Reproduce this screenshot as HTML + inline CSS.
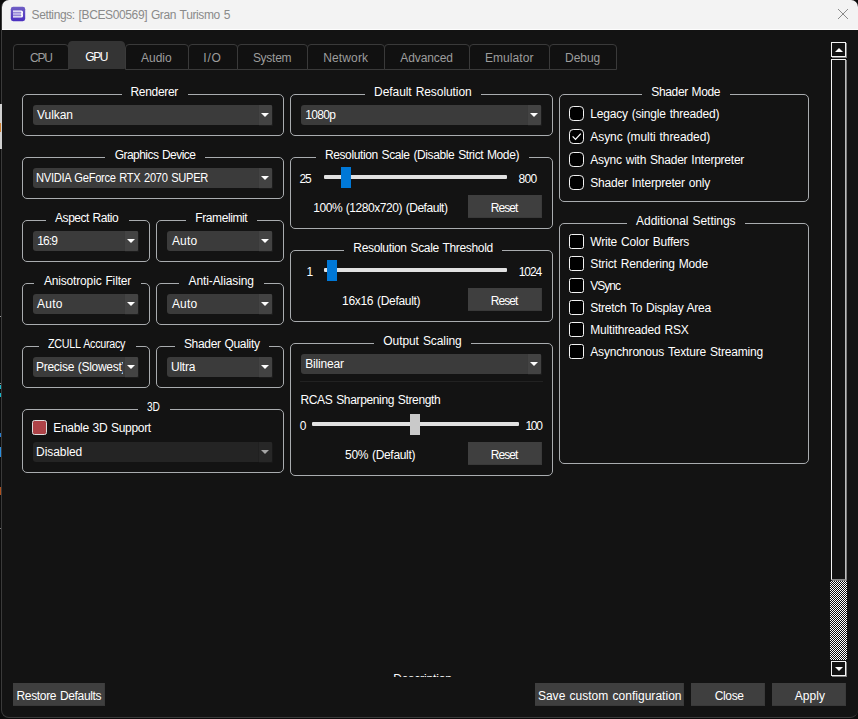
<!DOCTYPE html>
<html><head><meta charset="utf-8"><title>Settings: [BCES00569] Gran Turismo 5</title>
<style>
html,body{margin:0;padding:0;}
body{width:858px;height:719px;overflow:hidden;background:#0c0c0c;position:relative;font-family:"Liberation Sans",sans-serif;font-size:12px;}
div,span{position:absolute;box-sizing:border-box;}
.t{white-space:nowrap;line-height:14px;font-size:12px;word-spacing:0.8px;}
#win{left:1px;top:0;width:857px;height:718px;background:#131313;border-radius:8px 8px 8px 8px;border:1px solid #3a3a3a;border-top:none;border-right:none;overflow:hidden;}
#tb{left:0;top:0;width:858px;height:30px;background:#f3f3f3;border-bottom:1px solid #fdfdfd;}
.tab{border:1px solid #3a3a3a;border-radius:4px 4px 0 0;background:#111;}
.tab.sel{background:#343434;border-color:#343434;}
.g{border:1px solid #a9acaf;border-radius:5px;}
.gap{background:#131313;height:3px;}
.cb{background:#3b3b3b;border-radius:3px;}
.cbb{background:#434343;border-left:1px solid #3a3a3a;box-shadow:1px 1px 0 #1c1c1c;}
.cb.dis{background:#242424;}
.cb.dis .cbb{background:#272727;border-left-color:#202020;box-shadow:1px 1px 0 #181818;}
.arr{width:0;height:0;border-left:4px solid transparent;border-right:4px solid transparent;border-top:4.5px solid #fff;}
.dis .arr{border-top-color:#a5a5a5;}
.btn{background:#3f3f3f;border-right:1px solid #3a3a3a;border-bottom:1px solid #393939;}
.trk{background:#e1e1e1;height:4px;border-radius:1px;}
.hnd{width:10px;height:21px;background:#0078d7;}
.rb{width:15px;height:15px;border:1.3px solid #f4f4f4;border-radius:4.2px;background:#000;}
.ck{width:15px;height:15px;border:1.3px solid #f4f4f4;border-radius:2.5px;background:#000;}
</style></head><body>

<div id="win">
</div>
<div style="left:0;top:104px;width:2px;height:45px;background:#d0d0d0"></div>
<div style="left:0;top:123px;width:1px;height:9px;background:#d08030"></div>
<div style="left:0;top:316px;width:1px;height:1px;background:#9a9a9a"></div>
<div style="left:0;top:383px;width:1px;height:1px;background:#9a9a9a"></div>
<div style="left:0;top:385px;width:1px;height:4px;background:#19b5c8"></div>
<div style="left:0;top:393px;width:1px;height:4px;background:#19b5c8"></div>
<div style="left:0;top:433px;width:1px;height:4px;background:#2a7fd0"></div>
<div style="left:0;top:447px;width:1px;height:10px;background:#2a8fe0"></div>
<div style="left:0;top:487px;width:1px;height:8px;background:#b0501c"></div>
<div style="left:0;top:528px;width:1px;height:1px;background:#777"></div>
<div id="tb" style="left:2px;width:856px;border-radius:7px 7px 0 0;"></div>
<svg style="position:absolute;left:10px;top:6px" width="16" height="16" viewBox="0 0 16 16">
<defs><linearGradient id="ig" x1="0" y1="0" x2="0" y2="1"><stop offset="0" stop-color="#6f5ec4"/><stop offset="1" stop-color="#4a2fc0"/></linearGradient></defs>
<rect x="0.8" y="0.8" width="14.4" height="14.4" rx="2.4" fill="url(#ig)"/>
<path d="M3 4.5H11.3Q13 4.5 13 6.1V7.2Q13 7.8 12.4 8Q13 8.2 13 8.8V9.9Q13 11.5 11.3 11.5H3V10.3H10.6Q11.2 10.3 11.2 9.8V9.1Q11.2 8.6 10.6 8.6H3V7.4H10.6Q11.2 7.4 11.2 6.9V6.2Q11.2 5.7 10.6 5.7H3Z" fill="#fff"/>
<rect x="3" y="5.7" width="8.2" height="1.7" fill="#fff" opacity="0.35"/><rect x="3" y="8.6" width="8.2" height="1.7" fill="#fff" opacity="0.35"/>
</svg>
<svg style="position:absolute;left:837px;top:8px" width="12" height="12" viewBox="0 0 12 12"><path d="M1 1L11 11M11 1L1 11" stroke="#8a8a8a" stroke-width="1" fill="none"/></svg>
<div class="tab" style="left:13px;top:44px;width:56px;height:26px"></div>
<div class="tab sel" style="left:68px;top:41px;width:57px;height:28px"></div>
<div class="tab" style="left:125px;top:44px;width:64px;height:26px"></div>
<div class="tab" style="left:188px;top:44px;width:50px;height:26px"></div>
<div class="tab" style="left:237px;top:44px;width:71px;height:26px"></div>
<div class="tab" style="left:307px;top:44px;width:78px;height:26px"></div>
<div class="tab" style="left:384px;top:44px;width:86px;height:26px"></div>
<div class="tab" style="left:469px;top:44px;width:81px;height:26px"></div>
<div class="tab" style="left:549px;top:44px;width:68px;height:26px"></div>
<div class="g" style="left:22px;top:94px;width:262px;height:42px"></div>
<div class="gap" style="left:122.0px;top:93px;width:66.0px"></div>
<div class="g" style="left:22px;top:157px;width:262px;height:42px"></div>
<div class="gap" style="left:104.8px;top:156px;width:99.8px"></div>
<div class="g" style="left:22px;top:220px;width:128px;height:42px"></div>
<div class="gap" style="left:46.0px;top:219px;width:82.6px"></div>
<div class="g" style="left:156px;top:220px;width:128px;height:42px"></div>
<div class="gap" style="left:186.4px;top:219px;width:71.1px"></div>
<div class="g" style="left:22px;top:283px;width:128px;height:42px"></div>
<div class="gap" style="left:34.0px;top:282px;width:106.7px"></div>
<div class="g" style="left:156px;top:283px;width:128px;height:42px"></div>
<div class="gap" style="left:179.2px;top:282px;width:84.8px"></div>
<div class="g" style="left:22px;top:346px;width:128px;height:42px"></div>
<div class="gap" style="left:38.8px;top:345px;width:97.0px"></div>
<div class="g" style="left:156px;top:346px;width:128px;height:42px"></div>
<div class="gap" style="left:175.0px;top:345px;width:94.0px"></div>
<div class="g" style="left:22px;top:409px;width:262px;height:64px"></div>
<div class="gap" style="left:137.7px;top:408px;width:32.7px"></div>
<div class="g" style="left:290px;top:94px;width:263px;height:42px"></div>
<div class="gap" style="left:365.0px;top:93px;width:115.8px"></div>
<div class="g" style="left:290px;top:157px;width:263px;height:72px"></div>
<div class="gap" style="left:316.0px;top:156px;width:212.8px"></div>
<div class="g" style="left:290px;top:250px;width:263px;height:72px"></div>
<div class="gap" style="left:344.0px;top:249px;width:158.0px"></div>
<div class="g" style="left:290px;top:343px;width:263px;height:133px"></div>
<div class="gap" style="left:373.8px;top:342px;width:97.2px"></div>
<div class="g" style="left:559px;top:94px;width:250px;height:108px"></div>
<div class="gap" style="left:641.8px;top:93px;width:88.1px"></div>
<div class="g" style="left:559px;top:223px;width:250px;height:241px"></div>
<div class="gap" style="left:627.0px;top:222px;width:117.6px"></div>
<div class="cb" style="left:33px;top:105px;width:239px;height:20px"><div class="cbb" style="right:0;top:0;width:14px;height:20px;border-radius:0 1px 1px 0"></div><div class="arr" style="right:3px;top:8px"></div></div>
<div class="cb" style="left:33px;top:168px;width:239px;height:20px"><div class="cbb" style="right:0;top:0;width:14px;height:20px;border-radius:0 1px 1px 0"></div><div class="arr" style="right:3px;top:8px"></div></div>
<div class="cb" style="left:33px;top:231px;width:105px;height:20px"><div class="cbb" style="right:0;top:0;width:14px;height:20px;border-radius:0 1px 1px 0"></div><div class="arr" style="right:3px;top:8px"></div></div>
<div class="cb" style="left:167px;top:231px;width:105px;height:20px"><div class="cbb" style="right:0;top:0;width:14px;height:20px;border-radius:0 1px 1px 0"></div><div class="arr" style="right:3px;top:8px"></div></div>
<div class="cb" style="left:33px;top:294px;width:105px;height:20px"><div class="cbb" style="right:0;top:0;width:14px;height:20px;border-radius:0 1px 1px 0"></div><div class="arr" style="right:3px;top:8px"></div></div>
<div class="cb" style="left:167px;top:294px;width:105px;height:20px"><div class="cbb" style="right:0;top:0;width:14px;height:20px;border-radius:0 1px 1px 0"></div><div class="arr" style="right:3px;top:8px"></div></div>
<div class="cb" style="left:33px;top:357px;width:105px;height:20px"><div class="cbb" style="right:0;top:0;width:14px;height:20px;border-radius:0 1px 1px 0"></div><div class="arr" style="right:3px;top:8px"></div></div>
<div class="cb" style="left:167px;top:357px;width:105px;height:20px"><div class="cbb" style="right:0;top:0;width:14px;height:20px;border-radius:0 1px 1px 0"></div><div class="arr" style="right:3px;top:8px"></div></div>
<div class="cb dis" style="left:33px;top:442px;width:239px;height:20px"><div class="cbb" style="right:0;top:0;width:14px;height:20px;border-radius:0 1px 1px 0"></div><div class="arr" style="right:3px;top:8px"></div></div>
<div class="cb" style="left:301px;top:105px;width:240px;height:20px"><div class="cbb" style="right:0;top:0;width:14px;height:20px;border-radius:0 1px 1px 0"></div><div class="arr" style="right:3px;top:8px"></div></div>
<div class="cb" style="left:301px;top:354px;width:240px;height:20px"><div class="cbb" style="right:0;top:0;width:14px;height:20px;border-radius:0 1px 1px 0"></div><div class="arr" style="right:3px;top:8px"></div></div>
<div class="btn" style="left:468px;top:195px;width:74px;height:23px"></div>
<div class="btn" style="left:468px;top:288px;width:74px;height:23px"></div>
<div class="btn" style="left:468px;top:442px;width:74px;height:23px"></div>
<div class="btn" style="left:13px;top:683px;width:92px;height:23px"></div>
<div class="btn" style="left:535px;top:683px;width:149px;height:23px"></div>
<div class="btn" style="left:691px;top:683px;width:74px;height:23px"></div>
<div class="btn" style="left:772px;top:683px;width:74px;height:23px"></div>
<div class="ck" style="left:32px;top:420px;background:#ad4348;border-color:#dedede"></div>
<div class="trk" style="left:324px;top:175px;width:183px"></div><div class="hnd" style="left:341px;top:167px"></div>
<div class="trk" style="left:324px;top:268px;width:183px"></div><div class="hnd" style="left:327px;top:260px"></div>
<div style="left:300px;top:381px;width:243px;height:1px;background:#222"></div>
<div class="trk" style="left:312px;top:422px;width:207px"></div><div class="hnd" style="left:410px;top:414px;background:#c9c9c9"></div>
<div class="rb" style="left:569px;top:106.0px"></div>
<div class="rb" style="left:569px;top:129.0px"></div>
<svg style="position:absolute;left:569px;top:129.0px" width="15" height="15" viewBox="0 0 15 15"><path d="M3.6 7.4L6.5 10.4L11.8 4.6" stroke="#fff" stroke-width="1.25" fill="none"/></svg>
<div class="rb" style="left:569px;top:152.0px"></div>
<div class="rb" style="left:569px;top:175.0px"></div>
<div class="ck" style="left:569px;top:234.0px"></div>
<div class="ck" style="left:569px;top:256.0px"></div>
<div class="ck" style="left:569px;top:278.0px"></div>
<div class="ck" style="left:569px;top:300.0px"></div>
<div class="ck" style="left:569px;top:322.0px"></div>
<div class="ck" style="left:569px;top:344.0px"></div>
<div style="left:830px;top:581px;width:17px;height:79px;background-color:#0e0e0e;background-image:conic-gradient(#fff 25%,#0e0e0e 0 50%,#fff 0 75%,#0e0e0e 0);background-size:2px 2px;"></div>
<div style="left:831px;top:42px;width:15px;height:15px;border:1px solid #f4f4f4;box-shadow:1px 1px 0 #808080;background:#131313"></div>
<div style="left:831px;top:59px;width:15px;height:521px;border:1px solid #f4f4f4;border-right-color:#bdbdbd;border-bottom-color:#8a8a8a;box-shadow:1px 1px 0 #808080;background:#131313"></div>
<div style="left:831px;top:661px;width:15px;height:15px;border:1px solid #f4f4f4;box-shadow:1px 1px 0 #808080;background:#131313"></div>
<div style="left:835px;top:48px;width:0;height:0;border-left:4px solid transparent;border-right:4px solid transparent;border-bottom:4px solid #fff"></div>
<div style="left:835px;top:667px;width:0;height:0;border-left:4px solid transparent;border-right:4px solid transparent;border-top:4px solid #fff"></div>
<span class="t" id="t0" style="left:31.50px;top:8.00px;color:#8a8a8a;letter-spacing:-0.376px;">Settings: [BCES00569] Gran Turismo 5</span>
<span class="t" id="t1" style="left:30.10px;top:51.00px;color:#9d9d9d;letter-spacing:-1.200px;">CPU</span>
<span class="t" id="t2" style="left:85.30px;top:50.00px;color:#ffffff;letter-spacing:-1.450px;">GPU</span>
<span class="t" id="t3" style="left:141.10px;top:51.00px;color:#9d9d9d;letter-spacing:-0.025px;">Audio</span>
<span class="t" id="t4" style="left:203.30px;top:51.00px;color:#9d9d9d;letter-spacing:0.750px;">I/O</span>
<span class="t" id="t5" style="left:252.90px;top:51.00px;color:#9d9d9d;letter-spacing:-0.270px;">System</span>
<span class="t" id="t6" style="left:323.30px;top:51.00px;color:#9d9d9d;letter-spacing:0.117px;">Network</span>
<span class="t" id="t7" style="left:400.30px;top:51.00px;color:#9d9d9d;letter-spacing:-0.107px;">Advanced</span>
<span class="t" id="t8" style="left:484.90px;top:51.00px;color:#9d9d9d;letter-spacing:0.092px;">Emulator</span>
<span class="t" id="t9" style="left:565.10px;top:51.00px;color:#9d9d9d;letter-spacing:-0.075px;">Debug</span>
<span class="t" id="t10" style="left:130.50px;top:85.00px;color:#ffffff;letter-spacing:-0.320px;">Renderer</span>
<span class="t" id="t11" style="left:114.70px;top:148.00px;color:#ffffff;letter-spacing:-0.543px;">Graphics Device</span>
<span class="t" id="t12" style="left:55.10px;top:211.00px;color:#ffffff;letter-spacing:-0.485px;">Aspect Ratio</span>
<span class="t" id="t13" style="left:195.30px;top:211.00px;color:#ffffff;letter-spacing:-0.417px;">Framelimit</span>
<span class="t" id="t14" style="left:43.90px;top:274.00px;color:#ffffff;letter-spacing:-0.161px;">Anisotropic Filter</span>
<span class="t" id="t15" style="left:188.50px;top:274.00px;color:#ffffff;letter-spacing:-0.100px;">Anti-Aliasing</span>
<span class="t" id="t16" style="left:48.30px;top:337.00px;color:#ffffff;letter-spacing:-0.300px;transform:scaleX(0.8953);transform-origin:0 0;">ZCULL Accuracy</span>
<span class="t" id="t17" style="left:183.90px;top:337.00px;color:#ffffff;letter-spacing:-0.319px;">Shader Quality</span>
<span class="t" id="t18" style="left:147.10px;top:400.00px;color:#ffffff;letter-spacing:-0.300px;transform:scaleX(0.8503);transform-origin:0 0;">3D</span>
<span class="t" id="t19" style="left:374.10px;top:85.00px;color:#ffffff;letter-spacing:-0.074px;">Default Resolution</span>
<span class="t" id="t20" style="left:324.90px;top:148.00px;color:#ffffff;letter-spacing:-0.380px;">Resolution Scale (Disable Strict Mode)</span>
<span class="t" id="t21" style="left:353.30px;top:241.00px;color:#ffffff;letter-spacing:-0.330px;">Resolution Scale Threshold</span>
<span class="t" id="t22" style="left:383.30px;top:334.00px;color:#ffffff;letter-spacing:-0.080px;">Output Scaling</span>
<span class="t" id="t23" style="left:651.30px;top:85.00px;color:#ffffff;letter-spacing:-0.360px;">Shader Mode</span>
<span class="t" id="t24" style="left:636.10px;top:214.00px;color:#ffffff;letter-spacing:-0.039px;">Additional Settings</span>
<span class="t" id="t25" style="left:37.10px;top:108.00px;color:#ffffff;letter-spacing:-0.090px;">Vulkan</span>
<span class="t" id="t26" style="left:36.10px;top:171.00px;color:#ffffff;letter-spacing:-0.300px;transform:scaleX(0.9269);transform-origin:0 0;">NVIDIA GeForce RTX 2070 SUPER</span>
<span class="t" id="t27" style="left:37.30px;top:234.00px;color:#ffffff;letter-spacing:-0.950px;">16:9</span>
<span class="t" id="t28" style="left:171.90px;top:234.00px;color:#ffffff;letter-spacing:0.217px;">Auto</span>
<span class="t" id="t29" style="left:37.10px;top:297.00px;color:#ffffff;letter-spacing:0.183px;">Auto</span>
<span class="t" id="t30" style="left:171.90px;top:297.00px;color:#ffffff;letter-spacing:0.217px;">Auto</span>
<span class="t" id="t31" style="left:36.10px;top:360.00px;color:#ffffff;letter-spacing:-0.301px;width:87.20px;overflow:hidden;">Precise (Slowest)</span>
<span class="t" id="t32" style="left:170.90px;top:360.00px;color:#ffffff;letter-spacing:-0.175px;">Ultra</span>
<span class="t" id="t33" style="left:36.10px;top:445.00px;color:#ffffff;letter-spacing:-0.079px;">Disabled</span>
<span class="t" id="t34" style="left:305.30px;top:108.00px;color:#ffffff;letter-spacing:-0.675px;">1080p</span>
<span class="t" id="t35" style="left:305.30px;top:357.00px;color:#ffffff;letter-spacing:-0.179px;">Bilinear</span>
<span class="t" id="t36" style="left:53.30px;top:421.00px;color:#ffffff;letter-spacing:-0.319px;">Enable 3D Support</span>
<span class="t" id="t37" style="left:299.50px;top:172.00px;color:#ffffff;letter-spacing:-1.050px;">25</span>
<span class="t" id="t38" style="left:518.50px;top:172.00px;color:#ffffff;letter-spacing:-0.700px;">800</span>
<span class="t" id="t39" style="left:313.30px;top:201.00px;color:#ffffff;letter-spacing:-0.458px;">100% (1280x720) (Default)</span>
<span class="t" id="t40" style="left:306.50px;top:265.00px;color:#ffffff;letter-spacing:-5.250px;">1</span>
<span class="t" id="t41" style="left:518.70px;top:265.00px;color:#ffffff;letter-spacing:-1.050px;">1024</span>
<span class="t" id="t42" style="left:342.10px;top:294.00px;color:#ffffff;letter-spacing:-0.314px;">16x16 (Default)</span>
<span class="t" id="t43" style="left:300.50px;top:393.00px;color:#ffffff;letter-spacing:-0.355px;">RCAS Sharpening Strength</span>
<span class="t" id="t44" style="left:299.70px;top:419.00px;color:#ffffff;letter-spacing:-3.450px;">0</span>
<span class="t" id="t45" style="left:525.50px;top:419.00px;color:#ffffff;letter-spacing:-1.300px;">100</span>
<span class="t" id="t46" style="left:345.10px;top:448.00px;color:#ffffff;letter-spacing:-0.317px;">50% (Default)</span>
<span class="t" id="t47" style="left:490.70px;top:201.00px;color:#ffffff;letter-spacing:-0.925px;">Reset</span>
<span class="t" id="t48" style="left:490.70px;top:294.00px;color:#ffffff;letter-spacing:-0.925px;">Reset</span>
<span class="t" id="t49" style="left:490.70px;top:448.00px;color:#ffffff;letter-spacing:-0.925px;">Reset</span>
<span class="t" id="t50" style="left:16.50px;top:689.00px;color:#ffffff;letter-spacing:-0.343px;">Restore Defaults</span>
<span class="t" id="t51" style="left:537.90px;top:689.00px;color:#ffffff;letter-spacing:0.025px;">Save custom configuration</span>
<span class="t" id="t52" style="left:714.70px;top:689.00px;color:#ffffff;letter-spacing:-0.350px;">Close</span>
<span class="t" id="t53" style="left:794.70px;top:689.00px;color:#ffffff;letter-spacing:0.100px;">Apply</span>
<span class="t" id="t54" style="left:590.30px;top:107.00px;color:#ffffff;letter-spacing:-0.198px;">Legacy (single threaded)</span>
<span class="t" id="t55" style="left:590.30px;top:130.00px;color:#ffffff;letter-spacing:-0.079px;">Async (multi threaded)</span>
<span class="t" id="t56" style="left:590.30px;top:153.00px;color:#ffffff;letter-spacing:-0.229px;">Async with Shader Interpreter</span>
<span class="t" id="t57" style="left:590.30px;top:176.00px;color:#ffffff;letter-spacing:-0.204px;">Shader Interpreter only</span>
<span class="t" id="t58" style="left:590.30px;top:235.00px;color:#ffffff;letter-spacing:-0.195px;">Write Color Buffers</span>
<span class="t" id="t59" style="left:590.30px;top:257.00px;color:#ffffff;letter-spacing:-0.150px;">Strict Rendering Mode</span>
<span class="t" id="t60" style="left:590.30px;top:279.00px;color:#ffffff;letter-spacing:-1.000px;">VSync</span>
<span class="t" id="t61" style="left:590.30px;top:301.00px;color:#ffffff;letter-spacing:-0.276px;">Stretch To Display Area</span>
<span class="t" id="t62" style="left:590.30px;top:323.00px;color:#ffffff;letter-spacing:-0.194px;">Multithreaded RSX</span>
<span class="t" id="t63" style="left:590.30px;top:345.00px;color:#ffffff;letter-spacing:-0.181px;">Asynchronous Texture Streaming</span>
<span class="t" id="t64" style="left:393.30px;top:672.00px;color:#ffffff;letter-spacing:-0.140px;height:5.00px;overflow:hidden;">Description</span>
</body></html>
